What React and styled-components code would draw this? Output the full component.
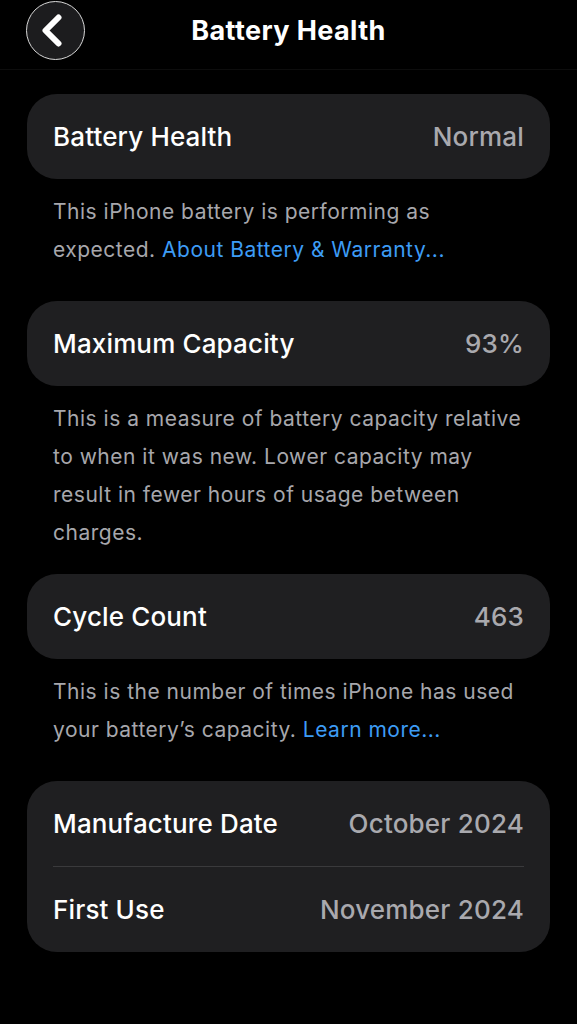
import React from 'react'
import styled, { createGlobalStyle } from 'styled-components'

const Global = createGlobalStyle`
  html, body { margin: 0; padding: 0; background: #000; }
  body { font-family: Inter, "Noto Sans", sans-serif; color: #fff; -webkit-font-smoothing: antialiased; }
`

const Screen = styled.div`
  width: 577px;
  min-height: 1024px;
  background: #000;
  display: flex;
  flex-direction: column;
`

const Header = styled.header`
  height: 70px;
  border-bottom: 1px solid #0d0d0d;
  display: grid;
  grid-template-columns: 110px 1fr 110px;
  align-items: center;
  box-sizing: border-box;
  padding-bottom: 9px;
`

const BackButton = styled.button`
  width: 59px;
  height: 59px;
  margin-left: 26px;
  border-radius: 50%;
  border: 1.5px solid #d8d8d8;
  background: #1c1c1e;
  display: flex;
  align-items: center;
  justify-content: center;
  padding: 0 8px 0 0;
`

const Title = styled.h1`
  margin: 0;
  text-align: center;
  font-size: 27px;
  font-weight: 700;
  letter-spacing: 0.4px;
`

const Content = styled.main`
  padding: 24px 27px 0;
  display: flex;
  flex-direction: column;
`

const Card = styled.section`
  background: #1f1f21;
  border-radius: 30px;
  padding: 0 26px;
`

const Row = styled.div`
  height: ${p => p.$h || 85}px;
  display: flex;
  align-items: center;
  justify-content: space-between;
  border-top: ${p => (p.$divider ? '1px solid #3a3a3c' : 'none')};
`

const Label = styled.span`
  font-size: 26px;
  font-weight: 500;
  color: #fff;
  letter-spacing: 0.15px;
`

const Value = styled.span`
  font-size: 26px;
  font-weight: 500;
  color: #a9a9ae;
  letter-spacing: 0.2px;
`

const Note = styled.p`
  margin: 0;
  padding: 14px 26px 0;
  height: ${p => p.$h}px;
  box-sizing: border-box;
  font-size: 21px;
  line-height: 38px;
  letter-spacing: 0.5px;
  color: #a7a7ac;
`

const Link = styled.a`
  color: #3d9cf5;
  text-decoration: none;
`

function Chevron() {
  return (
    <svg width="20" height="33" viewBox="0 0 20 33">
      <path d="M16.5 3.5 L3.5 16.5 L16.5 29.5" fill="none" stroke="#fff" strokeWidth="6" strokeLinecap="round" strokeLinejoin="round" />
    </svg>
  )
}

export default function App() {
  return (
    <Screen>
      <Global />
      <Header>
        <BackButton aria-label="Back"><Chevron /></BackButton>
        <Title>Battery Health</Title>
        <span />
      </Header>
      <Content>
        <Card>
          <Row><Label>Battery Health</Label><Value>Normal</Value></Row>
        </Card>
        <Note $h={122}>
          This iPhone battery is performing as expected. <Link>About Battery &amp; Warranty...</Link>
        </Note>
        <Card>
          <Row><Label>Maximum Capacity</Label><Value>93%</Value></Row>
        </Card>
        <Note $h={188}>
          This is a measure of battery capacity relative to when it was new. Lower capacity may result in fewer hours of usage between charges.
        </Note>
        <Card>
          <Row><Label>Cycle Count</Label><Value>463</Value></Row>
        </Card>
        <Note $h={122}>
          This is the number of times iPhone has used your battery’s capacity. <Link>Learn more...</Link>
        </Note>
        <Card>
          <Row $h={85}><Label>Manufacture Date</Label><Value>October 2024</Value></Row>
          <Row $h={85} $divider><Label>First Use</Label><Value>November 2024</Value></Row>
        </Card>
      </Content>
    </Screen>
  )
}
